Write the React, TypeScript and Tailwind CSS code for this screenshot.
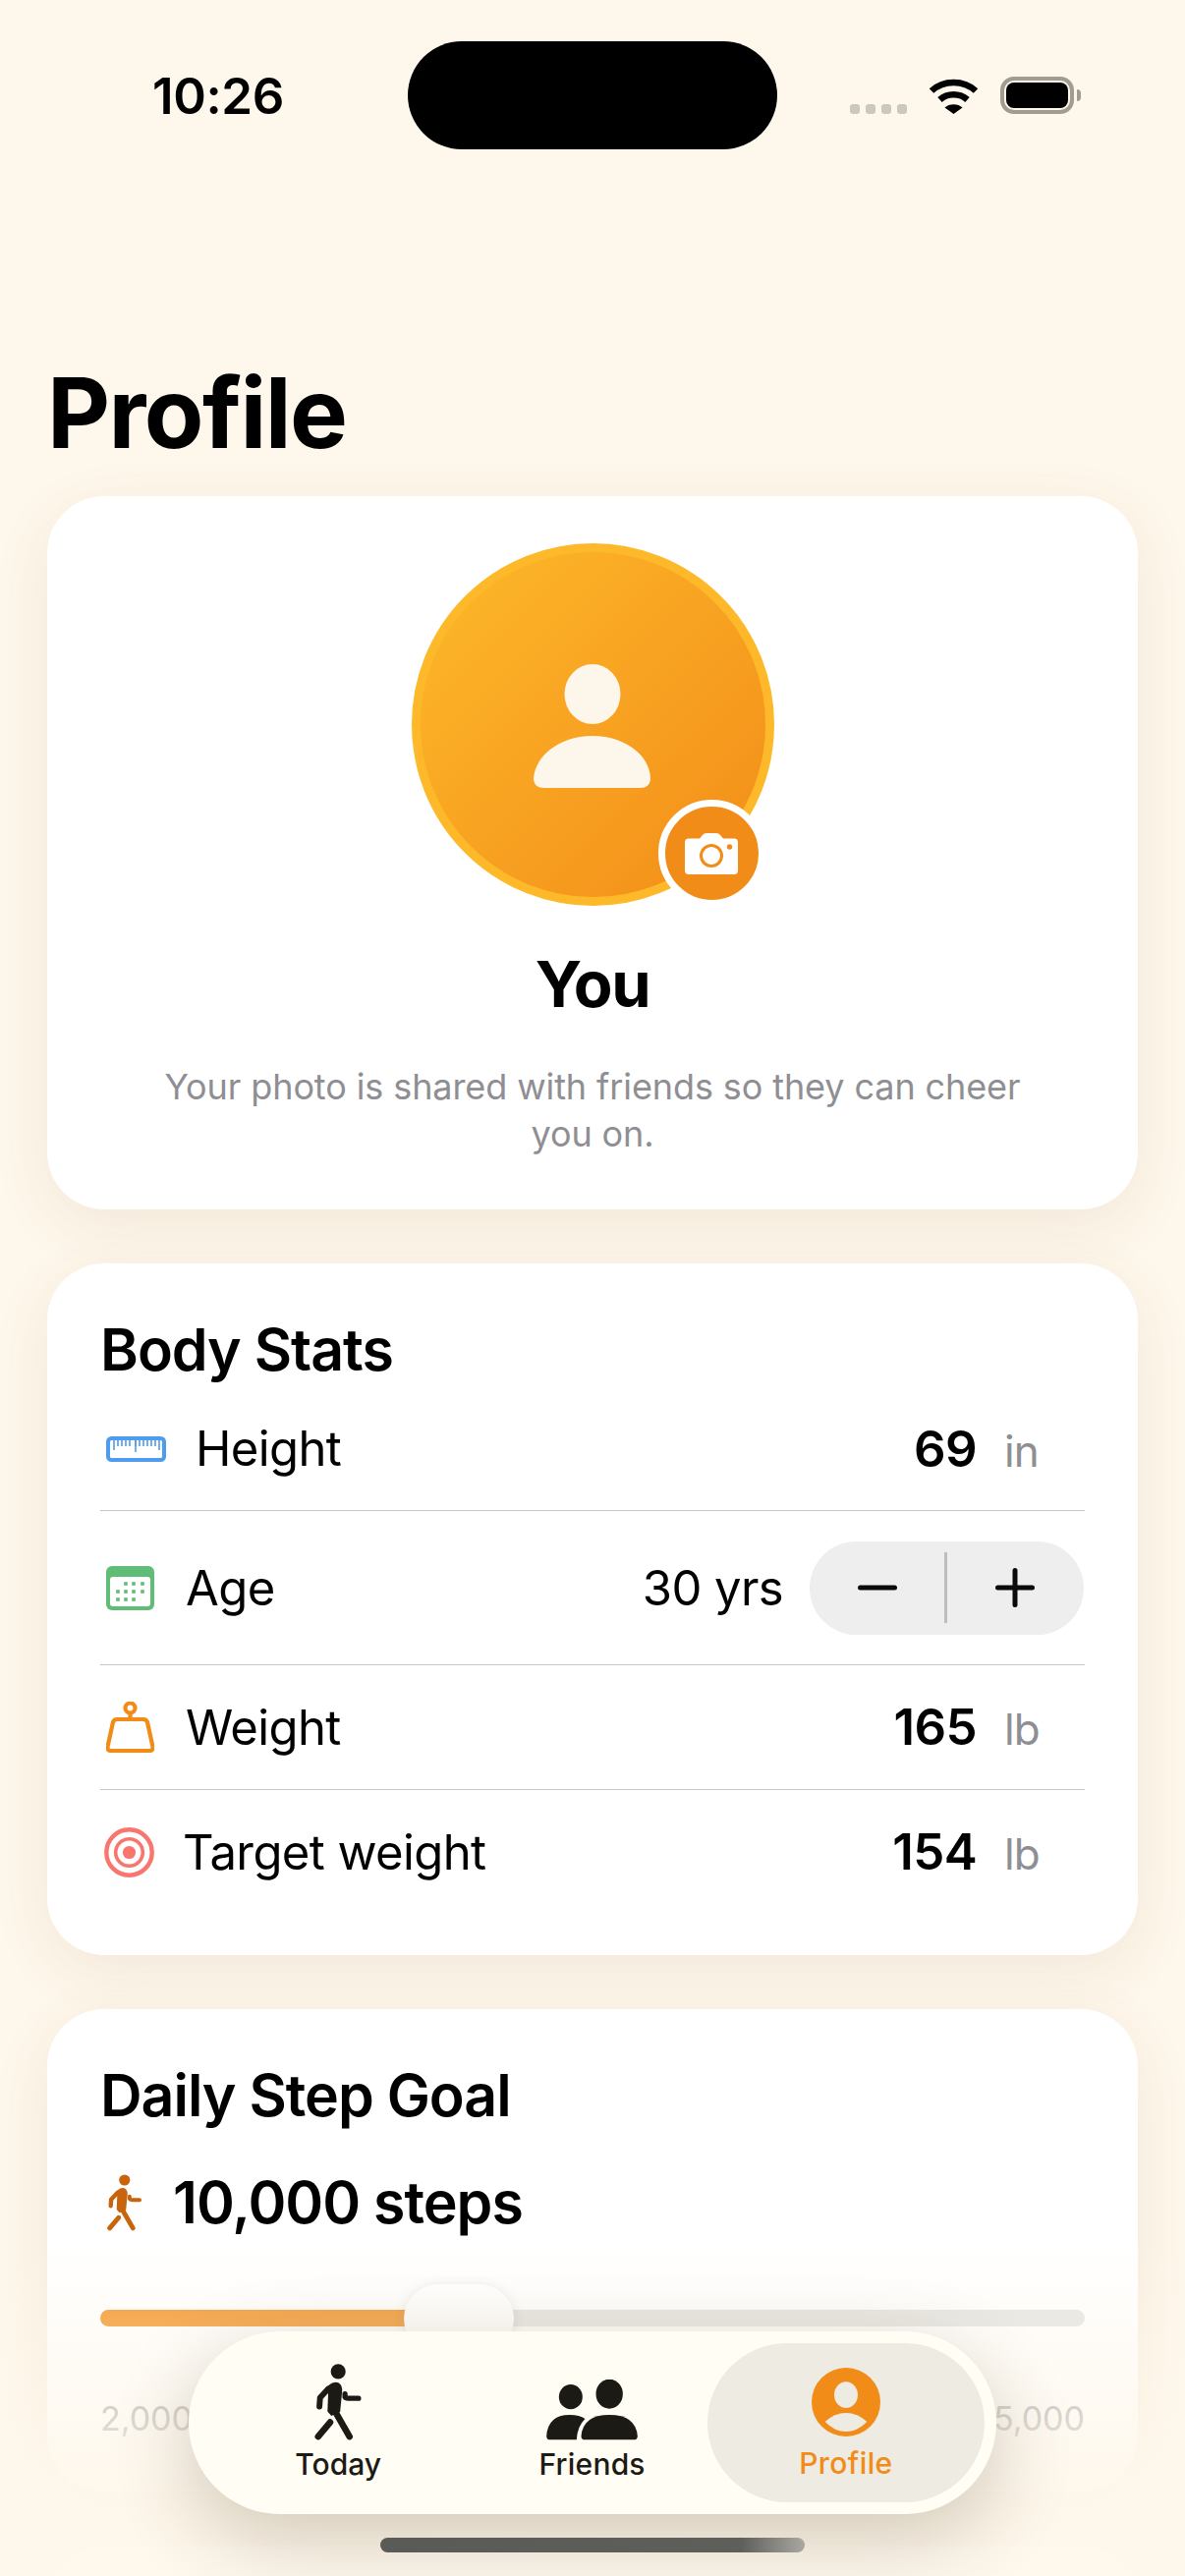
const WALK = (
  <>
    <circle cx="193" cy="127" r="23" />
    <path d="M163 170Q180 155 195 162Q207 170 205 190L199 252L172 264L160 250Z" />
    <path d="M163 180L137 208L135 235" fill="none" stroke="currentColor" strokeWidth="18" strokeLinecap="round" strokeLinejoin="round" />
    <path d="M182 248L228 328" fill="none" stroke="currentColor" strokeWidth="20" strokeLinecap="round" />
    <path d="M168 284L131 328" fill="none" stroke="currentColor" strokeWidth="20" strokeLinecap="round" />
    <path d="M214 196V206Q216 210 224 210H256" fill="none" stroke="currentColor" strokeWidth="16" strokeLinecap="round" />
  </>
);

function WalkIcon({ className }: { className: string }) {
  return (
    <svg viewBox="120 103 148 237" fill="currentColor" className={className}>
      {WALK}
    </svg>
  );
}

function Wifi() {
  return (
    <svg width="51" height="37" viewBox="0 0 51 37" fill="none" stroke="#000">
      <path d="M3 13.5C15 2 36 2 48 13.5" strokeWidth="6.5" />
      <path d="M11.5 22.5C19 15.5 32 15.5 39.5 22.5" strokeWidth="6.5" />
      <path d="M25.5 37L16.5 30.5C21 26 30 26 34.5 30.5Z" fill="#000" stroke="none" />
    </svg>
  );
}

function StatusBar() {
  return (
    <div className="flex h-[110px] items-center pl-[155px] mt-[42px]">
      <span className="w-[260px] text-[51px] leading-none font-semibold tracking-[-0.4px] text-black">10:26</span>
      <div className="w-[376px] h-[110px] rounded-full bg-black" />
      <div className="flex items-center ml-[74px]">
        <div className="flex gap-[6px] self-end mr-[22px]">
          {[0, 1, 2, 3].map((i) => (
            <span key={i} className="w-[10px] h-[10px] rounded-[3px] bg-[#cbc8bc]" />
          ))}
        </div>
        <Wifi />
        <div className="ml-[22px] w-[75px] h-[38px] rounded-[14px] border-[4px] border-[#a09c90] p-[2px]">
          <div className="w-full h-full rounded-[8px] bg-black" />
        </div>
        <div className="ml-[3px] w-[4px] h-[12px] rounded-r-full bg-[#a09c90]" />
      </div>
    </div>
  );
}

function Avatar() {
  return (
    <div className="relative w-[369px] h-[369px] rounded-full border-[9px] border-[#fdb92a] bg-gradient-to-br from-[#fdb92a] to-[#f28c18] flex items-center justify-center">
      <svg width="120" height="128" viewBox="0 0 120 128" fill="#fdf6ea" className="mt-[4px]">
        <ellipse cx="60" cy="30.5" rx="28.5" ry="30.5" />
        <path d="M0 116C2 92 28 73 60 73C92 73 118 92 119 116Q119 126 108 126H11Q0 126 0 116Z" />
      </svg>
      <div className="absolute left-[242px] top-[252px] w-[109px] h-[109px] rounded-full border-[7px] border-white bg-[#f28c18] flex items-center justify-center">
        <svg width="54" height="42" viewBox="0 0 54 42" fill="#fff">
          <path d="M4 5.5H15L18 2Q19.5 0 22 0H32Q34.5 0 36 2L39 5.5H50Q54 5.5 54 9.5V38Q54 42 50 42H4Q0 42 0 38V9.5Q0 5.5 4 5.5Z" />
          <circle cx="27" cy="23" r="10.5" fill="none" stroke="#f28c18" strokeWidth="3" />
          <circle cx="45.5" cy="14" r="2.7" fill="#f28c18" />
        </svg>
      </div>
    </div>
  );
}

function Ruler() {
  const ticks = [8, 12, 16, 20, 24, 30, 34, 38, 42, 46, 50, 54];
  return (
    <svg width="61" height="26" viewBox="0 0 61 26" fill="none" stroke="#4f9cee">
      <rect x="2" y="2" width="57" height="22" rx="3.5" strokeWidth="4" />
      {ticks.map((x, i) => (
        <path key={x} d={`M${x} 3V${i === 0 || i === 11 ? 14 : 10}`} strokeWidth="1.6" />
      ))}
      <path d="M30 3V16" strokeWidth="1.6" />
    </svg>
  );
}

function Calendar() {
  const dots = [
    [20, 18], [28, 18], [37, 18],
    [12, 26], [20, 26], [28, 26], [37, 26],
    [12, 34], [20, 34], [28, 34],
  ];
  return (
    <svg width="49" height="45" viewBox="0 0 49 45">
      <rect width="49" height="45" rx="6" fill="#5fbd78" />
      <rect x="4" y="11" width="41" height="30" rx="3" fill="#fff" />
      {dots.map(([x, y]) => (
        <rect key={`${x}-${y}`} x={x - 1.8} y={y - 1.8} width="3.6" height="3.6" fill="#5fbd78" />
      ))}
    </svg>
  );
}

function Kettle() {
  return (
    <svg width="49" height="52" viewBox="0 0 49 52" fill="none" stroke="#f28c18" strokeWidth="4.2">
      <circle cx="24.5" cy="6.5" r="5" />
      <path d="M24.5 12V18" />
      <path d="M11 18H38Q41 18 42 21L47.5 46Q48 50 44 50H5Q1 50 1.5 46L7 21Q8 18 11 18Z" strokeLinejoin="round" />
    </svg>
  );
}

function Target() {
  return (
    <svg width="51" height="51" viewBox="0 0 51 51" fill="none" stroke="#f9766e">
      <circle cx="25.5" cy="25.5" r="23.2" strokeWidth="4.4" />
      <circle cx="25.5" cy="25.5" r="13.8" strokeWidth="3.6" />
      <circle cx="25.5" cy="25.5" r="6.6" fill="#f9766e" stroke="none" />
    </svg>
  );
}

function Value({ n, unit }: { n: string; unit: string }) {
  return (
    <div className="ml-auto flex items-baseline gap-[28px] pr-[49px]">
      <span className="text-[51px] font-semibold tracking-[-0.6px] text-black">{n}</span>
      <span className="w-[33px] text-[44px] text-[#8e8e93] tracking-[-1px]">{unit}</span>
    </div>
  );
}

function Label({ children, className = "" }: { children: string; className?: string }) {
  return <span className={`text-[49px] tracking-[-0.6px] text-black ${className}`}>{children}</span>;
}

function Stepper() {
  return (
    <div className="w-[279px] h-[95px] rounded-full bg-[#eeeeef] flex items-center">
      <div className="flex-1 flex justify-center">
        <svg width="40" height="40" viewBox="0 0 40 40" stroke="#0a0a0a" strokeWidth="5" strokeLinecap="round">
          <path d="M2.5 20H37.5" />
        </svg>
      </div>
      <div className="w-[3px] h-[72px] bg-[#bdbdbd]" />
      <div className="flex-1 flex justify-center pr-[2px]">
        <svg width="40" height="40" viewBox="0 0 40 40" stroke="#0a0a0a" strokeWidth="5" strokeLinecap="round">
          <path d="M2.5 20H37.5M20 2.5V37.5" />
        </svg>
      </div>
    </div>
  );
}

function CardTitle({ children }: { children: string }) {
  return <h2 className="text-[59px] leading-[72px] font-semibold tracking-[-1px] text-black">{children}</h2>;
}

const card = "rounded-[58px] bg-white shadow-[0_16px_60px_rgba(120,90,40,0.09)]";

function TabBar() {
  return (
    <div className="absolute z-20 left-[192px] top-[2373px] w-[822px] h-[186px] rounded-full bg-[#fffdf4] shadow-[0_24px_80px_rgba(70,55,25,0.24)] flex items-center pl-[24px] pr-[12px]">
      <div className="w-[259px] flex flex-col items-center text-[#1c1a14]">
        <WalkIcon className="w-[49px] h-[78px]" />
        <span className="mt-[6px] text-[30px] leading-[36px] font-medium">Today</span>
      </div>
      <div className="w-[259px] flex flex-col items-center text-[#1c1a14] pl-[4px]">
        <svg width="93" height="62" viewBox="834 132 278 186" fill="currentColor" className="mt-[16px]">
          <ellipse cx="1026" cy="176" rx="41" ry="45" />
          <path d="M940 305Q945 240 1026 240Q1107 240 1112 305Q1112 316 1100 316H952Q940 316 940 305Z" />
          <ellipse cx="908" cy="185" rx="36" ry="38" />
          <path d="M834 305Q838 240 905 240Q935 240 952 252Q928 275 926 316H846Q834 316 834 305Z" />
        </svg>
        <span className="mt-[6px] text-[30px] leading-[36px] font-medium tracking-[0.2px]">Friends</span>
      </div>
      <div className="w-[285px] h-[162px] rounded-full bg-[#edebe2] flex flex-col items-center text-[#f28c18] ml-[-9px] pt-[25px]">
        <svg width="70" height="70" viewBox="375 120 210 210">
          <circle cx="480" cy="225" r="105" fill="currentColor" />
          <ellipse cx="480" cy="203" rx="36" ry="40" fill="#edebe2" />
          <path d="M416 285Q445 258 480 258Q515 258 544 285Q515 315 480 315Q445 315 416 285Z" fill="#edebe2" />
        </svg>
        <span className="mt-[9px] text-[30px] leading-[36px] font-medium tracking-[0.4px]">Profile</span>
      </div>
    </div>
  );
}

export default function App() {
  return (
    <div className="relative w-[1206px] h-[2622px] overflow-hidden bg-[#fef7eb] font-['Inter',sans-serif]">
      <StatusBar />
      <h1 className="mt-[218px] mb-[35px] pl-[48px] text-[99px] leading-[100px] font-bold tracking-[-1.6px] text-black">Profile</h1>

      <div className="flex flex-col gap-[55px] px-[48px]">
        <section className={`${card} flex flex-col items-center pt-[48px] pb-[53px]`}>
          <Avatar />
          <h2 className="mt-[40px] text-[65px] leading-[80px] font-bold tracking-[-1.4px] text-black">You</h2>
          <p className="mt-[40px] w-[900px] text-center text-[36px] leading-[48px] tracking-[-0.1px] text-[#8e8e93]">
            Your photo is shared with friends so they can cheer you on.
          </p>
        </section>

        <section className={`${card} px-[54px] pt-[52px] pb-[41px]`}>
          <CardTitle>Body Stats</CardTitle>
          <div className="mt-[5px] flex flex-col divide-y divide-[#c6c6c8]">
            <div className="h-[123px] flex items-center gap-[30px] pl-[6px] pb-[2px]">
              <Ruler />
              <Label>Height</Label>
              <Value n="69" unit="in" />
            </div>
            <div className="h-[157px] flex items-center gap-[32px] pl-[6px]">
              <Calendar />
              <Label className="pt-[2px]">Age</Label>
              <div className="ml-auto flex items-center gap-[27px] pr-[1px]">
                <span className="pt-[2px] text-[49px] tracking-[-0.6px] text-black">30 yrs</span>
                <Stepper />
              </div>
            </div>
            <div className="h-[127px] flex items-center gap-[32px] pl-[6px]">
              <Kettle />
              <Label className="pt-[2px]">Weight</Label>
              <Value n="165" unit="lb" />
            </div>
            <div className="h-[127px] flex items-center gap-[29px] pl-[4px]">
              <Target />
              <Label>Target weight</Label>
              <Value n="154" unit="lb" />
            </div>
          </div>
        </section>

        <section className={`${card} px-[54px] pt-[52px] pb-[54px]`}>
          <CardTitle>Daily Step Goal</CardTitle>
          <div className="mt-[37px] flex items-center gap-[31px] pl-[7px] text-[#c8640c]">
            <WalkIcon className="w-[36px] h-[58px]" />
            <span className="text-[59px] leading-[72px] font-semibold tracking-[-1px] text-black">10,000 steps</span>
          </div>
          <div className="relative mt-[73px] h-[17px] rounded-full bg-[#e3e3e1]">
            <div className="w-[365px] h-full rounded-l-full bg-[#f28c18]" />
            <div className="absolute left-[309px] top-[-26px] w-[112px] h-[70px] rounded-full bg-white shadow-[0_2px_14px_rgba(0,0,0,0.12)]" />
          </div>
          <div className="mt-[74px] flex justify-between text-[34px] leading-[40px] text-[#8e8e93]">
            <span>2,000</span>
            <span>15,000</span>
          </div>
        </section>

        <section className={`${card} h-[200px]`} />
      </div>

      <div className="absolute z-10 inset-x-0 bottom-0 h-[342px] bg-[linear-gradient(to_bottom,rgba(254,247,235,0),rgba(254,247,235,0.92)_72%)]" />
      <TabBar />
      <div className="absolute z-30 left-[387px] top-[2583px] w-[432px] h-[15px] rounded-full bg-[linear-gradient(to_right,#5a5a56,#5f5f5a_85%,#a9a7a0)]" />
    </div>
  );
}
